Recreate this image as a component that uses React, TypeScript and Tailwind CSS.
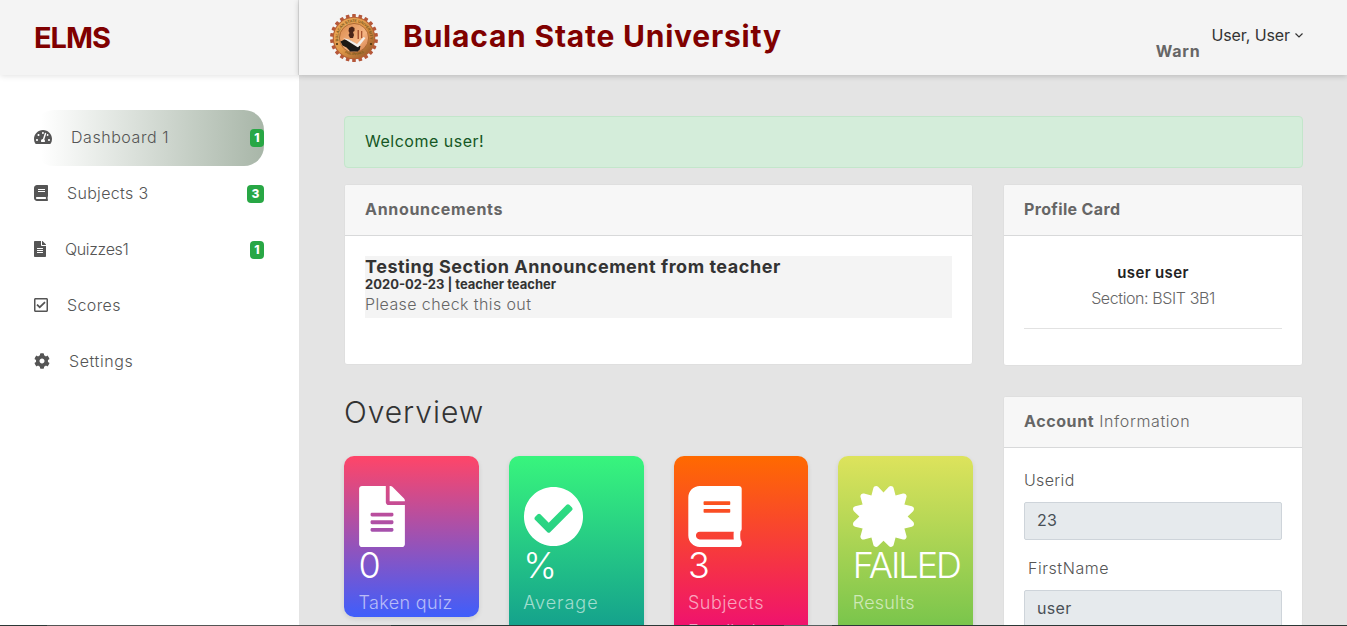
import type { ReactNode } from "react";
import type { IconType } from "react-icons";
import {
  FaBook,
  FaCertificate,
  FaCheckCircle,
  FaCog,
  FaFileAlt,
  FaRegCheckSquare,
  FaTachometerAlt,
} from "react-icons/fa";

type NavItem = {
  icon: IconType;
  iconClass: string;
  label: string;
  tracking: string;
  badge?: string;
  active?: boolean;
};

const navItems: NavItem[] = [
  { icon: FaTachometerAlt, iconClass: "w-[18px]", label: "Dashboard 1", tracking: "tracking-[0.55px]", badge: "1", active: true },
  { icon: FaBook, iconClass: "w-[14px]", label: "Subjects 3", tracking: "tracking-[0.32px]", badge: "3" },
  { icon: FaFileAlt, iconClass: "w-[12px]", label: "Quizzes1", tracking: "tracking-[-0.35px]", badge: "1" },
  { icon: FaRegCheckSquare, iconClass: "w-[14px]", label: "Scores", tracking: "tracking-[0.4px]" },
  { icon: FaCog, iconClass: "w-[16px]", label: "Settings", tracking: "tracking-[0.6px]" },
];

const stats = [
  { icon: FaFileAlt, iconClass: "w-[46px]", value: "0", label: "Taken quiz", tracking: "tracking-[0.35px]", extra: "", bg: "bg-[linear-gradient(#ff4568,#3f5efb)]", height: "h-[161px]" },
  { icon: FaCheckCircle, iconClass: "w-[61px]", value: "%", label: "Average", tracking: "tracking-[0.95px]", extra: "", bg: "bg-[linear-gradient(#38f57d,#11998e)]", height: "h-[188px]" },
  { icon: FaBook, iconClass: "w-[54px]", value: "3", label: "Subjects", tracking: "tracking-[0.5px]", extra: "Enrolled", bg: "bg-[linear-gradient(#ff6a00,#ee0979)]", height: "h-[188px]" },
  { icon: FaCertificate, iconClass: "w-[61px]", value: "FAILED", label: "Results", tracking: "tracking-[0.2px]", extra: "", bg: "bg-[linear-gradient(#dde35c,#6fc24a)]", height: "h-[188px]" },
];

const teeth = Array.from({ length: 22 }, (_, i) => (i * 360) / 22);

function Seal() {
  return (
    <svg viewBox="0 0 50 50" className="h-[50px] w-[50px]">
      <defs>
        <linearGradient id="seal" x1="0" y1="0" x2="1" y2="1">
          <stop offset="0" stopColor="#e9a95a" />
          <stop offset="0.5" stopColor="#e0984a" />
          <stop offset="1" stopColor="#8a4f22" />
        </linearGradient>
        <linearGradient id="disc" x1="0" y1="0" x2="1" y2="1">
          <stop offset="0" stopColor="#d98848" />
          <stop offset="0.6" stopColor="#f5b483" />
          <stop offset="1" stopColor="#d07a42" />
        </linearGradient>
        <path id="arcTop" d="M9.500 29 A16 16 0 1 1 40.500 29" />
        <path id="arcBottom" d="M10 35 A19.300 19.300 0 0 0 40 35" />
      </defs>
      {teeth.map((a) => (
        <rect key={a} x="23.200" y="1" width="3.600" height="5" rx="0.600" fill="#b5573a" transform={`rotate(${a} 25 25)`} />
      ))}
      <circle cx="25" cy="25" r="21.300" fill="#b86034" />
      <circle cx="25" cy="25" r="20.200" fill="url(#seal)" />
      <circle cx="25" cy="25" r="14.600" fill="url(#disc)" stroke="#a2602c" strokeWidth="0.800" />
      <text fontSize="3.800" fontWeight="700" fill="#7d5a1c" fontFamily="Liberation Sans, sans-serif">
        <textPath href="#arcTop" startOffset="1" textLength="54" lengthAdjust="spacingAndGlyphs">
          BULACAN STATE UNIVERSITY
        </textPath>
      </text>
      <text fontSize="3.200" fontWeight="700" fill="#7d5a1c" fontFamily="Liberation Sans, sans-serif">
        <textPath href="#arcBottom" startOffset="7.500">PHILIPPINES</textPath>
      </text>
      <path d="M20 15 l3 -1.500 2.500 1.500 0 3 -1.500 1 1 3 -1 3 -3 0 -1.500 -3 1 -2 -1 -2z" fill="#4a2418" />
      <path d="M28.500 17 h1.500 v9 h-1.500z M32 18 h1.300 v7 h-1.300z" fill="#a95430" />
      <path d="M11.500 28.500 l4 -2 5 0.500 5 3 3 3 3 0 -1 4.500 h-10 l-3 -3 -4 -2z" fill="#1c1915" />
      <path d="M14 25 l6 1.500 8 4.500 6.500 -7 2 1 -7.500 9.500z" fill="#f3f0ec" />
      <path d="M19.500 34.500 h11 l-1.500 4 h-8z" fill="#1b1b1b" />
      <circle cx="8" cy="31" r="1.100" fill="#4a3210" />
      <circle cx="42" cy="31" r="1.100" fill="#4a3210" />
    </svg>
  );
}

function CardHeader({ children }: { children: ReactNode }) {
  return (
    <div className="flex h-[51px] items-center border-b border-[#d8d9da] bg-[#f7f7f7] px-5 pb-[3px] leading-6">
      {children}
    </div>
  );
}

function Field({ label, value, labelClass }: { label: string; value: string; labelClass: string }) {
  return (
    <div className="flex flex-col">
      <label className={`mb-[10px] leading-6 font-light whitespace-nowrap text-[#555] ${labelClass}`}>{label}</label>
      <div className="flex h-[38px] items-center rounded-[2px] border border-[#ced4da] bg-[#e6eaed] px-3 pb-[2px] tracking-[0.3px] text-[#495057]">
        {value}
      </div>
    </div>
  );
}

export default function App() {
  return (
    <div className="relative flex h-[626px] w-full overflow-hidden bg-[#e4e4e4] font-[Inter,'Open_Sans',sans-serif] text-[16px] text-[#666]">
      <aside className="flex w-[299px] shrink-0 flex-col bg-white">
        <div className="flex h-[75px] shrink-0 items-center border-r border-[#dfdfdf] bg-[#f4f4f4] pl-[34px] shadow-[0_1px_6px_rgba(0,0,0,0.12)]">
          <span className="text-[29px] font-bold tracking-[-1.050px] text-[#800000]">ELMS</span>
        </div>
        <nav className="mt-[35px] flex flex-col pr-[35px] pl-[34px]">
          {navItems.map(({ icon: Icon, iconClass, label, tracking, badge, active }) => (
            <a
              key={label}
              className={`flex h-14 items-center rounded-[20px] pb-[2px] text-[#555] ${active ? "bg-[linear-gradient(to_right,#ffffff_3%,#a8b6a8)]" : ""}`}
            >
              <Icon className={`mr-[19px] h-4 shrink-0 ${iconClass}`} />
              <span className={`grow font-light whitespace-nowrap ${tracking}`}>{label}</span>
              {badge && (
                <span className="mt-[2px] flex h-[18px] items-center rounded-[4px] bg-[#28a745] px-[4.500px] text-[12px] font-extrabold text-white">
                  {badge}
                </span>
              )}
            </a>
          ))}
        </nav>
      </aside>

      <div className="flex min-w-0 grow flex-col">
        <header className="z-10 flex h-[75px] shrink-0 items-start bg-[#f4f4f4] pr-[44px] pl-[30px] shadow-[0_1px_6px_rgba(0,0,0,0.2)]">
          <div className="mt-[13px] mr-[24px]">
            <Seal />
          </div>
          <h1 className="mt-[15px] text-[30px] leading-[42px] font-bold tracking-[0.78px] whitespace-nowrap text-[#800000]">
            Bulacan State University
          </h1>
          <div className="ml-auto flex items-start">
            <span className="mt-[39px] mr-[11px] leading-6 font-bold tracking-[0.8px]">Warn</span>
            <span className="mt-[23px] leading-6 tracking-[-0.1px] whitespace-nowrap text-[#333]">User, User</span>
            <svg viewBox="0 0 8 5" className="mt-[33px] ml-[5px] h-[5px] w-2" fill="none" stroke="#333" strokeWidth="1.200">
              <path d="M0.500 0.500 L4 4 L7.500 0.500" />
            </svg>
          </div>
        </header>

        <main className="flex flex-col pt-[41px] pr-[44px] pl-[45px]">
          <div className="flex h-[52px] shrink-0 items-center rounded-[4px] border border-[#c3e6cb] bg-[#d4edda] px-5 pb-[3px] tracking-[0.5px] text-[#155724]">
            Welcome user!
          </div>

          <div className="mt-4 flex justify-between">
            <div className="flex w-[629px] flex-col">
              <section className="h-[181px] overflow-hidden rounded-[3px] border border-[#dfdfdf] bg-white">
                <CardHeader>
                  <strong className="font-bold tracking-[0.68px]">Announcements</strong>
                </CardHeader>
                <div className="p-5">
                  <div className="flex h-[62px] flex-col bg-[#f4f4f4] whitespace-nowrap">
                    <h4 className="text-[18px] leading-[22px] font-bold tracking-[0.53px] text-[#333]">
                      Testing Section Announcement from teacher
                    </h4>
                    <h6 className="text-[13px] leading-[13px] font-bold text-[#333]">2020-02-23 | teacher teacher</h6>
                    <p className="leading-[27px] font-light tracking-[0.4px]">Please check this out</p>
                  </div>
                </div>
              </section>

              <h2 className="mt-[26px] text-[30px] leading-[42px] font-light tracking-[0.95px] text-[#333]">Overview</h2>

              <div className="mt-[23px] grid grid-cols-4 items-start gap-[30px]">
                {stats.map(({ icon: Icon, iconClass, value, label, tracking, extra, bg, height }) => (
                  <div
                    key={label}
                    className={`flex flex-col rounded-[10px] px-[14.500px] pt-[30px] shadow-[0_2px_5px_rgba(0,0,0,0.1)] ${bg} ${height}`}
                  >
                    <Icon className={`h-[61px] shrink-0 text-white ${iconClass}`} />
                    <span className="text-[36px] leading-[36px] font-light tracking-[-2px] text-white">{value}</span>
                    <span className={`mt-[6px] text-[18px] leading-[27px] font-light whitespace-nowrap text-white/60 ${tracking}`}>{label}</span>
                    <span className="mt-[2px] text-[18px] leading-[27px] font-light whitespace-nowrap text-white/60">{extra}</span>
                  </div>
                ))}
              </div>
            </div>

            <div className="flex w-[300px] flex-col gap-[30px]">
              <section className="h-[182px] overflow-hidden rounded-[3px] border border-[#dfdfdf] bg-white">
                <CardHeader>
                  <strong className="font-bold tracking-[0.35px]">Profile Card</strong>
                </CardHeader>
                <div className="flex flex-col px-5 pt-[24px] text-center">
                  <h5 className="text-[15px] leading-[26px] font-semibold tracking-[0.35px] text-[#222]">user user</h5>
                  <p className="-mt-px leading-[26px] font-light tracking-[-0.4px]">Section: BSIT 3B1</p>
                  <hr className="mt-[17px] border-[#e2e2e2]" />
                </div>
              </section>

              <section className="h-[260px] overflow-hidden rounded-[3px] border border-[#dfdfdf] bg-white">
                <CardHeader>
                  <span className="tracking-[0.600px] whitespace-nowrap">
                    <strong className="font-bold">Account</strong> <span className="font-light">Information</span>
                  </span>
                </CardHeader>
                <div className="flex flex-col gap-[16px] px-5 pt-[20px]">
                  <Field label="Userid" value="23" labelClass="tracking-[0.35px]" />
                  <Field label="FirstName" value="user" labelClass="pl-1 tracking-[0.55px]" />
                </div>
              </section>
            </div>
          </div>
        </main>
      </div>

      <div className="absolute inset-x-0 bottom-0 z-20 flex h-px bg-[#2c3836]">
        <div className="ml-[47px] w-[344px] bg-[#555]" />
        <div className="ml-[393px] w-12 bg-[#566060]" />
      </div>
    </div>
  );
}
